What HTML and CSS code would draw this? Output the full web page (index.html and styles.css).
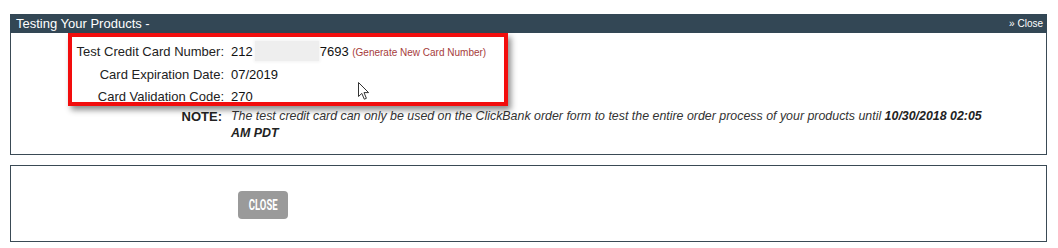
FILE: index.html
```html
<!DOCTYPE html>
<html>
<head>
<meta charset="utf-8">
<link rel="stylesheet" href="styles.css">
</head>
<body>
<div class="modal">
  <div class="hdr">
    <span class="title">Testing Your Products -</span>
    <span class="hclose">&raquo; Close</span>
  </div>
  <div class="panel info">
    <div class="rows">
      <div class="lbl">Test Credit Card Number:</div>
      <div class="val">212<span class="blur"></span>7693 <a class="gen">(Generate New Card Number)</a></div>
      <div class="lbl">Card Expiration Date:</div>
      <div class="val">07/2019</div>
      <div class="lbl">Card Validation Code:</div>
      <div class="val">270</div>
      <div class="lbl note-lbl">NOTE:</div>
      <div class="note">The test credit card can only be used on the ClickBank order form to test the entire order process of your products until <b>10/30/2018 02:05 AM PDT</b></div>
    </div>
    <div class="redbox"></div>
    <svg class="cursor" width="13" height="20" viewBox="0 0 13 20"><path d="M1.5 1.5 L1.5 15.5 L4.8 12.4 L7.3 18.2 L9.4 17.3 L7 11.6 L11.6 11.6 Z" fill="#fff" stroke="#333" stroke-width="1" stroke-linejoin="round"/></svg>
  </div>
  <div class="panel actions">
    <button class="btn"><span>CLOSE</span></button>
  </div>
</div>
</body>
</html>
```
FILE: styles.css
```css
html, body { margin: 0; padding: 0; background: #fff; }
body { font-family: "Liberation Sans", Arial, sans-serif; font-size: 13px; color: #222; }
.modal { margin: 14px 11px 0 10px; }
.hdr {
  height: 19px; background: #334755; color: #fff;
  display: flex; justify-content: space-between; align-items: center;
  padding: 0 4px 0 6px;
}
.title { font-size: 13px; }
.hclose { font-size: 10px; }
.panel { border: 1px solid #3a4a55; }
.info { border-top: none; position: relative; padding: 8px 0 12px 0; }
.rows {
  display: grid; grid-template-columns: 213px 1fr; column-gap: 7px;
  line-height: 22px;
}
.lbl { text-align: right; color: #222; }
.val { color: #111; }
.blur {
  display: inline-block; width: 64px; height: 20px; vertical-align: -5px;
  background: #eeeeee; box-shadow: 0 0 3px 1px #f2f2f2;
  margin: 0 1px 0 2px;
}
.gen { color: #a63c3c; font-size: 10px; }
.note-lbl { font-weight: bold; line-height: 17px; padding-right: 2px; }
.note { font-style: italic; font-size: 12.4px; line-height: 17px; color: #333; padding-right: 50px; }
.note b { color: #222; }
.redbox {
  position: absolute; left: 57px; top: 0; width: 432px; height: 65px;
  border: 4px solid #f20d0d;
  box-shadow: 3px 4px 6px rgba(0,0,0,0.45);
  pointer-events: none;
}
.cursor { position: absolute; left: 346px; top: 48px; }
.actions { margin-top: 10px; height: 50px; padding: 25px 0 0 227px; }
.btn {
  width: 50px; height: 28px; border: none; border-radius: 4px;
  background: #9a9a9a; color: #fff; padding: 0;
  font-family: Roboto, sans-serif; font-weight: bold; font-size: 14px;
  display: flex; align-items: center; justify-content: center;
}
.btn span { display: inline-block; transform: scaleX(0.68); }
```
